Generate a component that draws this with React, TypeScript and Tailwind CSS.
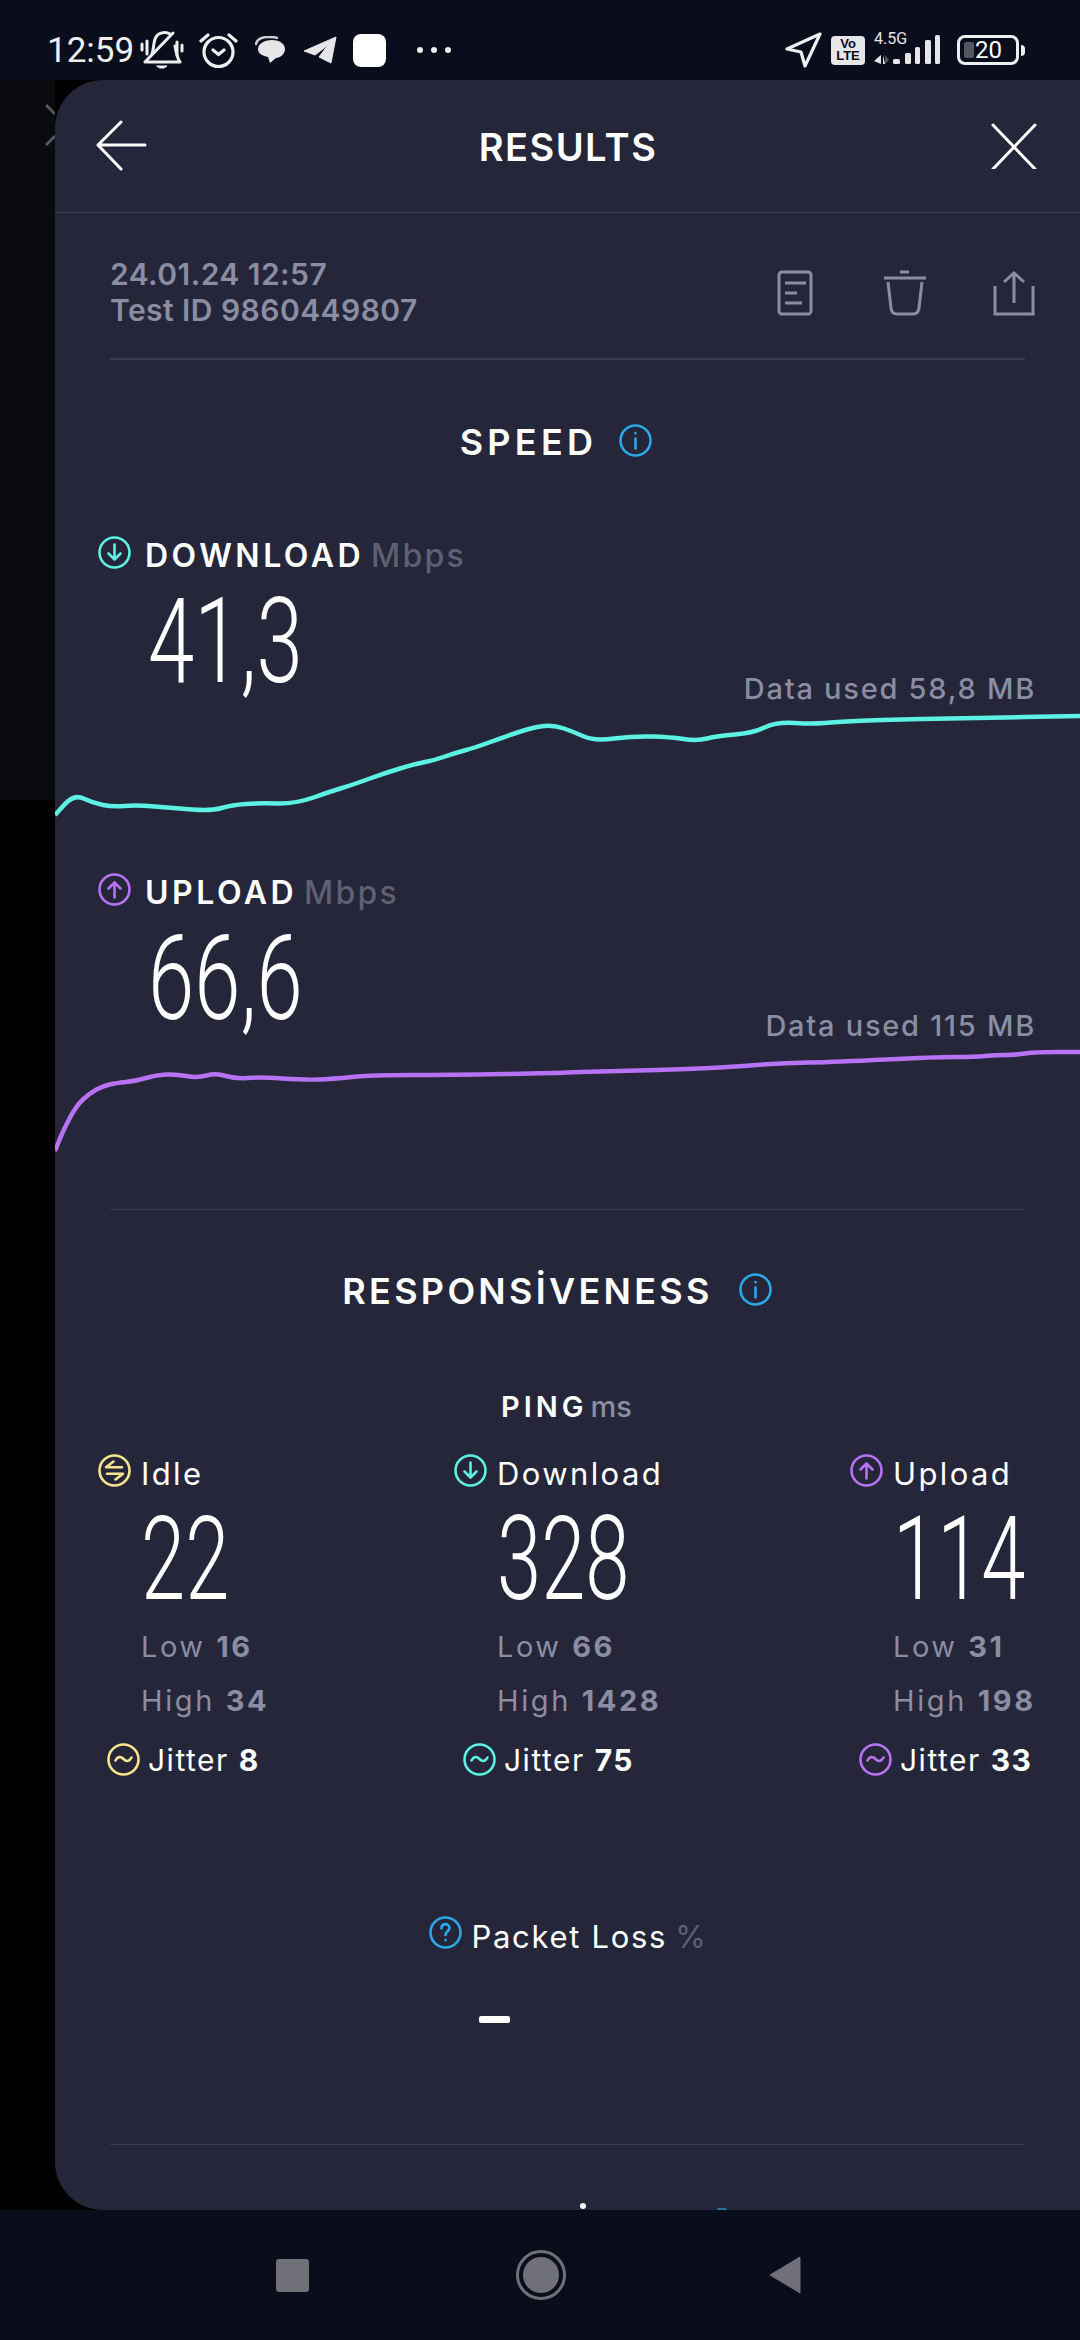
const font = "font-['Inter','Noto_Sans',sans-serif]";

// chart points as measured on the screenshot, x and y in page pixels
const downloadLine = [[55,816],[74,795],[93,804],[113,808],[136,806],[173,809],[211,812],[232,806],[259,804],[295,805],[332,792],[352,786],[385,774],[415,765],[435,761],[455,754],[474,749],[504,738],[534,728],[554,726],[574,733],[594,742],[634,737],[670,738],[697,742],[717,737],[753,734],[776,723],[813,725],[836,723],[876,721],[969,719],[1080,717]];
const uploadLine = [[55,1153],[63,1133],[76,1108],[90,1095],[103,1088],[116,1085],[136,1083],[156,1077],[176,1076],[197,1080],[216,1075],[236,1081],[259,1079],[305,1082],[332,1081],[372,1077],[451,1077],[557,1075],[577,1074],[624,1073],[690,1071],[730,1069],[783,1065],[836,1064],[935,1059],[975,1059],[995,1057],[1015,1057],[1035,1054],[1080,1054]];

// smooth line through the midpoints
function toPath(points: number[][], top: number) {
  const p = points.map(([x, y]) => [x - 55, y - top]);
  let d = `M${p[0][0]} ${p[0][1]} L${(p[0][0] + p[1][0]) / 2} ${(p[0][1] + p[1][1]) / 2}`;
  for (let i = 1; i < p.length - 1; i++) {
    d += ` Q${p[i][0]} ${p[i][1]} ${(p[i][0] + p[i + 1][0]) / 2} ${(p[i][1] + p[i + 1][1]) / 2}`;
  }
  return `${d} L${p[p.length - 1][0]} ${p[p.length - 1][1]}`;
}

function CircleIcon({ color, kind, className = "" }: { color: string; kind: "down" | "up" | "idle" | "wave" | "help" | "info"; className?: string }) {
  return (
    <svg width="33" height="33" viewBox="0 0 33 33" fill="none" stroke={color} strokeWidth="2.6" strokeLinecap="round" strokeLinejoin="round" className={`shrink-0 ${className}`}>
      <circle cx="16.5" cy="16.5" r="15" />
      {kind === "down" && <path d="M16.5 8.5v15M10.5 17.5l6 6 6-6" />}
      {kind === "up" && <path d="M16.5 24.5v-15M10.5 15.5l6-6 6 6" />}
      {kind === "idle" && <path d="M24 13.200H8l7.500-5.700M9 19.800h16l-7.500 5.700" />}
      {kind === "wave" && <path d="M8.500 17.500c2-4 5-4.500 8-1.500s6 2.500 8-1.500" />}
      {kind === "help" && <path d="M12.500 12.500c0-6 8-5.500 8-.5 0 3-4 3.500-4 7M16.500 24v.2" />}
      {kind === "info" && <path d="M16.500 14.500v10M16.500 9v.2" />}
    </svg>
  );
}

function Chart({ points, top, height, color }: { points: number[][]; top: number; height: number; color: string }) {
  return (
    <svg width="1025" height={height} viewBox={`0 0 1025 ${height}`} fill="none" className="block">
      <path d={toPath(points, top)} stroke={color} strokeWidth="4.5" strokeLinejoin="round" />
    </svg>
  );
}

function SpeedBlock({ label, value, used, color, kind }: { label: string; value: string; used: string; color: string; kind: "down" | "up" }) {
  return (
    <>
      <div className="flex h-[40px] items-center pl-[43px]">
        <CircleIcon color={color} kind={kind} className="-mt-[4px]" />
        <span className="ml-[14px] mt-[4px] text-[32px] font-semibold tracking-[3.500px] text-white">{label}</span>
        <span className="ml-[7px] mt-[4px] text-[32px] font-medium tracking-[2.200px] text-[#5f6072]">Mbps</span>
      </div>
      <div className="mt-[22px] flex h-[108px] items-end justify-between pl-[93px] pr-[44px]">
        <div className="w-[224px] h-[85px] self-start whitespace-nowrap font-['Roboto',sans-serif] font-light text-[119px] leading-[91px] text-white origin-left scale-x-[0.7]">
          {value}
        </div>
        <span className="h-[30px] text-[29px] leading-[30px] font-medium tracking-[1.750px] text-[#8b8da3]">{used}</span>
      </div>
    </>
  );
}

function PingColumn({ label, value, low, high, jitter, color, kind }: { label: string; value: string; low: string; high: string; jitter: string; color: string; kind: "idle" | "down" | "up" }) {
  return (
    <div>
      <div className="flex h-[40px] items-center">
        <CircleIcon color={color} kind={kind} className="-mt-[4px]" />
        <span className="ml-[10px] mt-[4px] text-[31px] tracking-[2.400px] text-white">{label}</span>
      </div>
      <div className="mt-[21px] pl-[43px]">
        <div className="h-[83px] whitespace-nowrap font-['Roboto',sans-serif] font-light text-[117px] leading-[92px] text-white origin-left scale-x-[0.68]">{value}</div>
      </div>
      <div className="mt-[33px] h-[36px] pl-[43px] text-[29px] leading-[36px] tracking-[2.500px] text-[#8b8da3]">
        Low <span className="font-bold">{low}</span>
      </div>
      <div className="mt-[18px] h-[36px] whitespace-nowrap pl-[43px] text-[29px] leading-[36px] tracking-[2.600px] text-[#8b8da3]">
        High <span className="font-bold">{high}</span>
      </div>
      <div className="mt-[20px] flex h-[40px] items-center pl-[9px]">
        <CircleIcon color={color} kind="wave" />
        <span className="ml-[8px] mt-[2px] whitespace-nowrap text-[30px] tracking-[1.500px] text-white">
          Jitter <span className="font-bold">{jitter}</span>
        </span>
      </div>
    </div>
  );
}

function StatusBar() {
  return (
    <div className="flex h-[80px] shrink-0 items-center bg-[#0a0d1c] pl-[47px] pr-[55px] pt-[20px] text-[#eeeeee]">
      <span className="w-[93px] font-['Roboto',sans-serif] text-[35px] leading-none">12:59</span>
      {/* muted bell */}
      <svg width="44" height="38" viewBox="0 0 44 38" fill="none" stroke="#eeeeee" strokeWidth="3" strokeLinecap="round" strokeLinejoin="round">
        <path d="M12 23c2-5 1-12 4-17 2-4 9-6 14-3M35 15c1 6 2 12 5 16H7" />
        <path d="M33 2 5 31M2 13v6M7 10v13M37 11v13M42 14v6" />
        <path d="M17 35h10l-3 2h-4z" fill="#eeeeee" strokeWidth="1" />
      </svg>
      {/* alarm */}
      <svg width="39" height="37" viewBox="0 0 39 37" fill="none" stroke="#eeeeee" strokeWidth="3.200" strokeLinecap="round" strokeLinejoin="round" className="ml-[15px]">
        <circle cx="19.500" cy="20" r="14.500" />
        <path d="M14 18l5.500 4.500L25 18M2 9l7-6M37 9l-7-6" />
      </svg>
      {/* chat */}
      <svg width="30" height="28" viewBox="0 0 30 28" className="ml-[17px]">
        <path d="M1 8C2 3 8 1 14 1c3 0 6 0 8 1" fill="none" stroke="#cfcfd2" strokeWidth="2.500" strokeLinecap="round" />
        <path d="M17 4c8 0 13 4 13 9s-5 9-9 9l-6 5-2-6C8 20 3 18 3 13s6-9 14-9z" fill="#e6e6e8" />
      </svg>
      {/* telegram */}
      <svg width="34" height="28" viewBox="0 0 34 28" className="ml-[18px]">
        <path d="M33 1 1 15l11 4 13-10-9 12 12 6z" fill="#e6e6e8" stroke="#e6e6e8" strokeLinejoin="round" />
      </svg>
      <div className="ml-[16px] h-[33px] w-[33px] rounded-[8px] bg-white" />
      <div className="ml-[31px] flex w-[34px] justify-between">
        <div className="h-[6px] w-[6px] rounded-full bg-[#eeeeee]" />
        <div className="h-[6px] w-[6px] rounded-full bg-[#eeeeee]" />
        <div className="h-[6px] w-[6px] rounded-full bg-[#eeeeee]" />
      </div>

      <div className="ml-auto flex items-center">
        <svg width="37" height="36" viewBox="0 0 37 36" fill="none" stroke="#eeeeee" strokeWidth="3.200" strokeLinejoin="round">
          <path d="M35 2 2 17l14 3 4 14z" />
        </svg>
        <div className="ml-[9px] flex h-[29px] w-[34px] flex-col items-center justify-center rounded-[4px] bg-[#e6e6e8] font-['Liberation_Sans',sans-serif] text-[13px] font-bold leading-[12px] text-[#0a0d1c]">
          <span>Vo</span>
          <span>LTE</span>
        </div>
        <div className="ml-[9px] -mt-[4px] flex w-[66px] flex-col">
          <span className="h-[14px] font-['Roboto',sans-serif] text-[16px] leading-[14px] text-[#e6e6e8]">4.5G</span>
          <svg width="66" height="18" viewBox="0 0 66 18" className="overflow-visible">
            <path d="M7 9 0 15l7 3zM9 9v9h2z" fill="#e6e6e8" />
            <path d="M11 9v9l4-4z" fill="#55565f" />
            <rect x="19" y="13" width="7" height="5" rx="1.500" fill="#e6e6e8" />
            <rect x="31" y="7" width="6" height="11" rx="1.500" fill="#e6e6e8" />
            <rect x="41" y="1" width="5" height="17" rx="1.500" fill="#e6e6e8" />
            <rect x="51" y="-6" width="6" height="24" rx="1.500" fill="#e6e6e8" />
            <rect x="61" y="-11" width="5" height="29" rx="1.500" fill="#e6e6e8" />
          </svg>
        </div>
        <div className="ml-[17px] flex h-[30px] w-[62px] items-center rounded-[8px] border-[3px] border-[#eeeeee] pl-[4px]">
          <div className="h-[16px] w-[10px] rounded-[2px] bg-[#55565f]" />
          <span className="ml-[1px] font-['Roboto',sans-serif] text-[24px] leading-none text-white">20</span>
        </div>
        <div className="ml-[2px] h-[11px] w-[4px] rounded-r-full bg-[#eeeeee]" />
      </div>
    </div>
  );
}

export default function App() {
  return (
    <div className={`flex h-[2340px] w-[1080px] flex-col overflow-hidden bg-[#0a0d1c] ${font}`}>
      <StatusBar />

      <div className="flex h-[2130px] bg-black">
        {/* sliver of the screen underneath */}
        <div className="relative h-[720px] w-[55px] shrink-0 bg-[#0a0b0f]">
          <svg width="10" height="42" viewBox="0 0 10 42" fill="none" stroke="#55565c" strokeWidth="3" className="absolute left-[45px] top-[24px]">
            <path d="M1 1l9 9M10 32l-9 9" />
          </svg>
        </div>

        <div className="relative flex-1 overflow-hidden rounded-l-[48px] bg-[#252639]">
          {/* header */}
          <div className="flex h-[133px] items-center justify-between border-b border-[#3a3b4f] pl-[41px] pr-[43px]">
            <svg width="52" height="52" viewBox="0 0 52 52" fill="none" stroke="white" strokeWidth="3" strokeLinecap="round" strokeLinejoin="round">
              <path d="M2 25h47M25 2 2 25l23 24" />
            </svg>
            <span className="mr-[3px] mt-[2px] text-[38px] font-semibold tracking-[1.500px] text-white">RESULTS</span>
            <svg width="46" height="46" viewBox="0 0 46 46" fill="none" stroke="white" strokeWidth="3" strokeLinecap="round">
              <path d="M2 2l42 44M44 2 2 46" />
            </svg>
          </div>

          {/* date and actions */}
          <div className="mx-[55px] flex h-[147px] items-start justify-between border-b-2 border-[#3a3b4f] pt-[43px]">
            <div className="text-[30px] font-semibold leading-[36px] tracking-[0.450px] text-[#8b8da3]">
              <div>24.01.24 12:57</div>
              <div>Test ID 9860449807</div>
            </div>
            <div className="-mr-[10px] flex items-start pt-[14px]">
              <svg width="36" height="46" viewBox="0 0 36 46" fill="none" stroke="#8b8da3" strokeWidth="3">
                <rect x="2" y="2" width="32" height="42" rx="3" />
                <path d="M8 13h21M8 23h12M8 33h17" />
              </svg>
              <svg width="44" height="46" viewBox="0 0 44 46" fill="none" stroke="#8b8da3" strokeWidth="3" className="ml-[70px]">
                <path d="M1 8h42M17 2h9M5 12l3 26c.5 4 3 6 6 6h16c3 0 5.500-2 6-6l3-26" />
              </svg>
              <svg width="42" height="46" viewBox="0 0 42 46" fill="none" stroke="#8b8da3" strokeWidth="3" className="ml-[66px]">
                <path d="M2 16v28h38V16M21 33V3M11 12l10-9 10 9" />
              </svg>
            </div>
          </div>

          {/* speed */}
          <div className="mt-[60px] flex h-[40px] items-center justify-center pr-[23px]">
            <span className="mt-[4px] text-[36px] font-semibold tracking-[4.300px] text-white">SPEED</span>
            <CircleIcon color="#2aa8e8" kind="info" className="ml-[22px]" />
          </div>

          <div className="mt-[74px]">
            <SpeedBlock label="DOWNLOAD" value="41,3" used="Data used 58,8 MB" color="#5cf2e3" kind="down" />
          </div>
          <Chart points={downloadLine} top={705} height={120} color="#5cf2e3" />

          <div className="mt-[47px]">
            <SpeedBlock label="UPLOAD" value="66,6" used="Data used 115 MB" color="#b873f5" kind="up" />
          </div>
          <Chart points={uploadLine} top={1043} height={117} color="#b873f5" />

          <div className="mx-[55px] mt-[51px] h-px bg-[#3a3b4f]" />

          {/* responsiveness */}
          <div className="mt-[57px] flex h-[44px] items-center justify-center pr-[21px]">
            <span className="mt-[4px] text-[36px] font-semibold tracking-[3.300px] text-white">RESPONSİVENESS</span>
            <CircleIcon color="#2aa8e8" kind="info" className="ml-[26px]" />
          </div>

          <div className="mt-[76px] flex h-[36px] items-center justify-center pr-[2px] text-[29px]">
            <span className="mt-[4px] font-semibold tracking-[4px] text-white">PING</span>
            <span className="ml-[3px] mt-[4px] font-medium text-[#8b8da3]">ms</span>
          </div>

          <div className="mt-[29px] grid grid-cols-[356px_396px_1fr] pl-[43px]">
            <PingColumn label="Idle" value="22" low="16" high="34" jitter="8" color="#f6e58d" kind="idle" />
            <PingColumn label="Download" value="328" low="66" high="1428" jitter="75" color="#5cf2e3" kind="down" />
            <PingColumn label="Upload" value="114" low="31" high="198" jitter="33" color="#b873f5" kind="up" />
          </div>

          {/* packet loss */}
          <div className="mt-[136px] flex h-[40px] items-center justify-center text-[31px]">
            <CircleIcon color="#2aa8e8" kind="help" className="-mt-[6px]" />
            <span className="ml-[9px] mt-[4px] tracking-[1.700px] text-white">Packet Loss</span>
            <span className="ml-[8px] mt-[4px] text-[#5f6072]">%</span>
          </div>
          <div className="ml-[424px] mt-[61px] h-[7px] w-[31px] rounded-[2px] bg-white" />

          <div className="mx-[55px] mt-[121px] h-px bg-[#3a3b4f]" />

          {/* top of the next section, cut off by the panel edge */}
          <div className="absolute left-[525px] top-[2123px] h-[6px] w-[6px] rounded-full bg-white" />
          <div className="absolute left-[662px] top-[2128px] h-[2px] w-[10px] rounded-t-full bg-[#2aa8e8]/60" />
        </div>
      </div>

      {/* nav bar */}
      <div className="flex h-[130px] shrink-0 items-center bg-[#0a0d1c] pl-[276px]">
        <div className="h-[33px] w-[33px] rounded-[3px] bg-[#6f7078]" />
        <div className="ml-[207px] flex h-[50px] w-[50px] items-center justify-center rounded-full border-[3px] border-[#6f7078]">
          <div className="h-[36px] w-[36px] rounded-full bg-[#6f7078]" />
        </div>
        <svg width="32" height="38" viewBox="0 0 32 38" className="ml-[203px]">
          <path d="M31 1v36L1 19z" fill="#6f7078" stroke="#6f7078" strokeLinejoin="round" />
        </svg>
      </div>
    </div>
  );
}
